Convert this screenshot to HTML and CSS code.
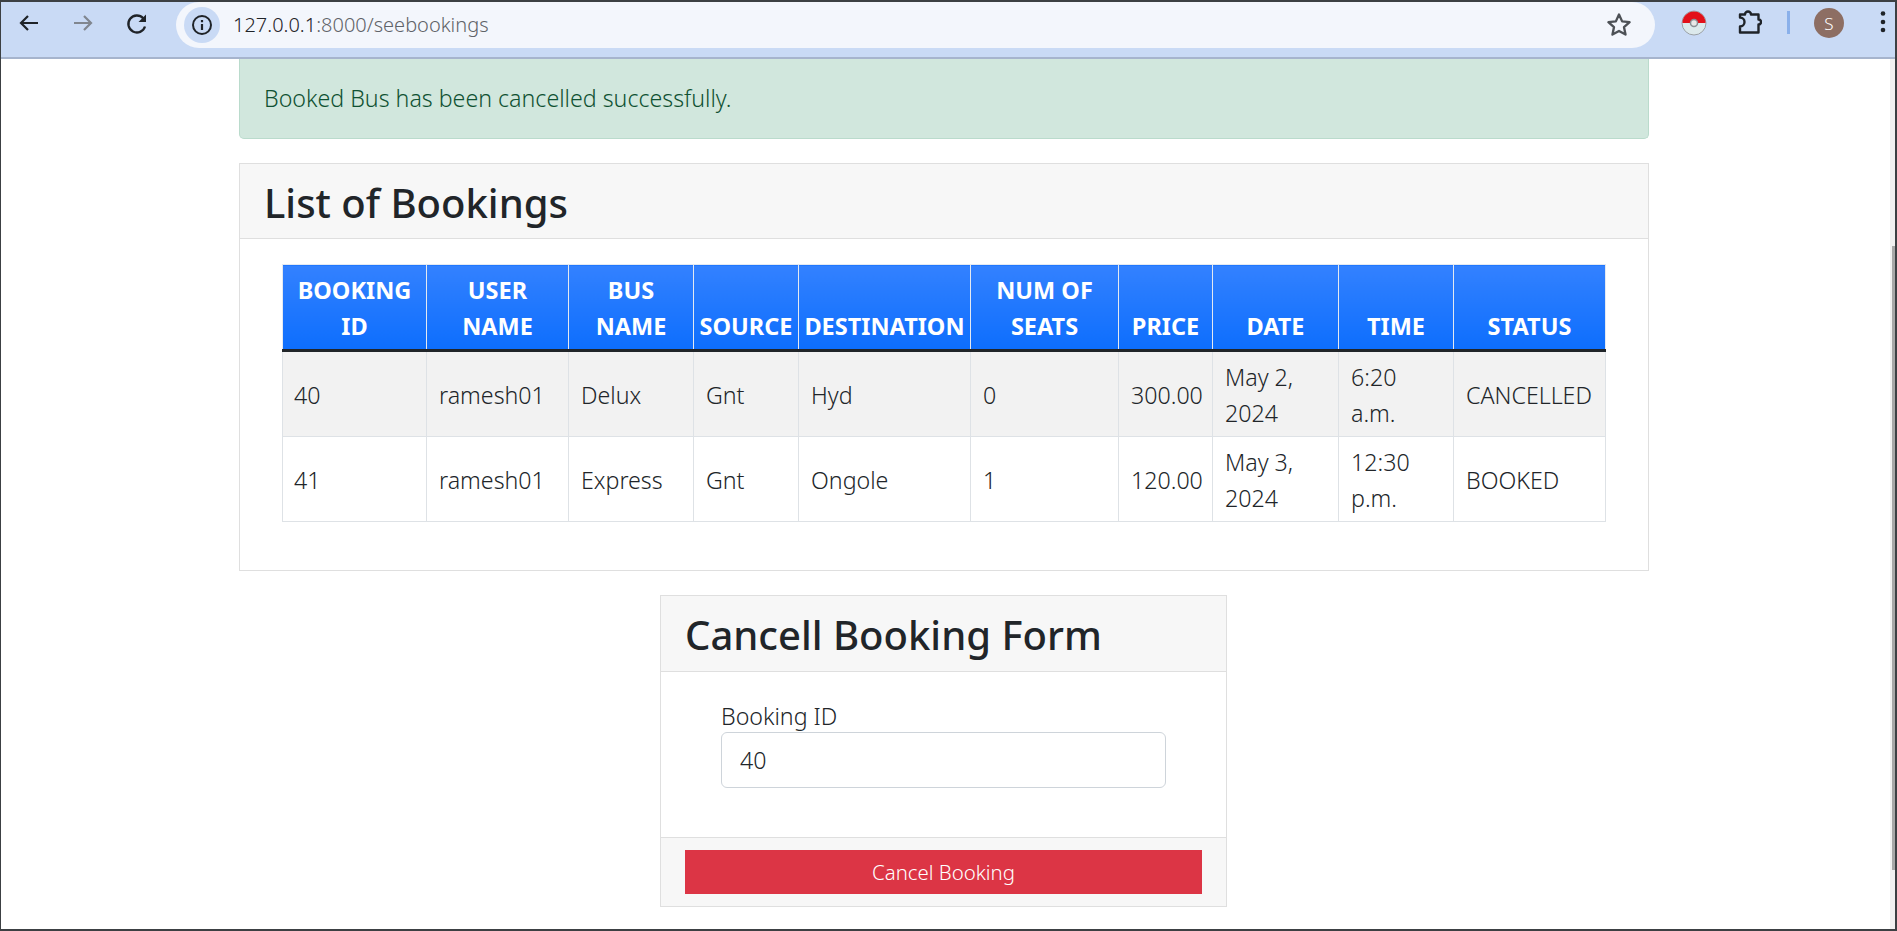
FILE: index.html
```html
<!DOCTYPE html>
<html lang="en">
<head>
<meta charset="utf-8">
<title>seebookings</title>
<link rel="stylesheet" href="styles.css">
</head>
<body>
<div class="window">
  <header class="chrome">
    <div class="nav-icons">
      <svg class="ic" viewBox="0 0 24 24"><path d="M21 12H4M11 5 4 12l7 7" fill="none" stroke="#1f2328" stroke-width="2.200"/></svg>
      <svg class="ic" viewBox="0 0 24 24"><path d="M3 12h17M13 5l7 7-7 7" fill="none" stroke="#80868f" stroke-width="2.200"/></svg>
      <svg class="ic" viewBox="0 0 24 24"><path d="M20 15.500a8.500 8.500 0 1 1-1.800-8.200L20 9" fill="none" stroke="#1f2328" stroke-width="2.300"/><path d="M21 3.500v7.500h-7.500z" fill="#1f2328"/></svg>
    </div>
    <div class="omnibox">
      <span class="site-info"><svg viewBox="0 0 22 22" width="22" height="22"><circle cx="11" cy="11" r="9" fill="none" stroke="#1f2328" stroke-width="2"/><path d="M11 10v6M11 6v2.200" stroke="#1f2328" stroke-width="2.200"/></svg></span>
      <span class="url"><span class="host">127.0.0.1</span>:8000/seebookings</span>
      <svg class="star" viewBox="0 0 24 24"><path d="m12 3 2.700 5.900 6.400.7-4.800 4.300 1.300 6.300L12 17.100l-5.600 3.100 1.300-6.300-4.800-4.300 6.400-.7z" fill="none" stroke="#4d5156" stroke-width="2" stroke-linejoin="round"/></svg>
    </div>
    <div class="tools">
      <svg class="poke" viewBox="0 0 26 26"><circle cx="13" cy="13" r="12" fill="#dce9ec" stroke="#9aa0a6"/><path d="M1.500 13a11.500 11.500 0 0 1 23 0z" fill="#e2101a"/><circle cx="13" cy="13" r="3.500" fill="#e8e8e8" stroke="#8a8f94" stroke-width="1.500"/></svg>
      <svg class="puzzle" viewBox="0 0 24 24"><path d="M2 4.500H7a3 3 0 0 1 6 0H20.500V9.500a2.500 2.500 0 0 1 0 5V22.500H2V16.500a4.500 4.500 0 0 0 0-9z" fill="none" stroke="#1f2328" stroke-width="2.400" stroke-linejoin="round"/></svg>
      <span class="divider"></span>
      <span class="avatar">S</span>
      <svg class="menu" viewBox="0 0 6 24"><circle cx="3" cy="3.500" r="2.300" fill="#1f2328"/><circle cx="3" cy="12" r="2.300" fill="#1f2328"/><circle cx="3" cy="20" r="2.300" fill="#1f2328"/></svg>
    </div>
  </header>
  <main class="page">
    <div class="alert">Booked Bus has been cancelled successfully.</div>
    <section class="card">
      <div class="card-head"><h2>List of Bookings</h2></div>
      <div class="card-body">
        <table class="bookings">
          <colgroup>
            <col class="c1"><col class="c2"><col class="c3"><col class="c4"><col class="c5"><col class="c6"><col class="c7"><col class="c8"><col class="c9"><col class="c10">
          </colgroup>
          <thead>
            <tr><th>BOOKING ID</th><th>USER NAME</th><th>BUS NAME</th><th>SOURCE</th><th>DESTINATION</th><th>NUM OF SEATS</th><th>PRICE</th><th>DATE</th><th>TIME</th><th>STATUS</th></tr>
          </thead>
          <tbody>
            <tr class="odd"><td>40</td><td>ramesh01</td><td>Delux</td><td>Gnt</td><td>Hyd</td><td>0</td><td>300.00</td><td>May 2, 2024</td><td>6:20 a.m.</td><td>CANCELLED</td></tr>
            <tr><td>41</td><td>ramesh01</td><td>Express</td><td>Gnt</td><td>Ongole</td><td>1</td><td>120.00</td><td>May 3, 2024</td><td>12:30 p.m.</td><td>BOOKED</td></tr>
          </tbody>
        </table>
      </div>
    </section>
    <section class="card form-card">
      <div class="card-head"><h2>Cancell Booking Form</h2></div>
      <div class="form-body">
        <label class="field-label" for="bid">Booking ID</label>
        <input class="field" id="bid" type="text" value="40">
      </div>
      <div class="card-foot"><button class="cancel" type="button">Cancel Booking</button></div>
    </section>
  </main>
  <div class="scroll-track"><div class="scroll-thumb"></div></div>
</div>
</body>
</html>
```
FILE: styles.css
```css
* { box-sizing: border-box; }
html, body { margin: 0; height: 100%; overflow: hidden; }
body { font-family: "Noto Sans", "Open Sans", sans-serif; font-weight: 350; color: #212529; background: #fff; }
.window { position: relative; height: 931px; border-style: solid; border-color: #3c4043; border-width: 2px 2px 2px 1px; display: flex; flex-direction: column; overflow: hidden; }
.chrome { height: 57px; flex: none; background: #c9daf5; border-bottom: 2px solid #a6b4cd; display: flex; align-items: flex-start; }
.nav-icons { display: flex; gap: 30px; padding: 9px 0 0 16px; width: 175px; flex: none; }
.ic { width: 24px; height: 24px; flex: none; }
.omnibox { width: 1479px; height: 46px; background: #f3f6fc; border-radius: 23px; display: flex; align-items: center; padding: 0 22px 0 8px; flex: none; }
.site-info { width: 36px; height: 36px; border-radius: 50%; background: #c9daf5; display: flex; align-items: center; justify-content: center; flex: none; }
.url { margin: 0 0 2px 13px; font-size: 20px; color: #5f6368; flex: 1; }
.host { color: #1f2328; }
.star { width: 28px; height: 28px; flex: none; }
.tools { display: flex; align-items: center; height: 40px; flex: 1; padding-left: 26px; }
.poke { width: 26px; height: 26px; margin-top: 1px; flex: none; }
.puzzle { width: 24px; height: 24px; margin-left: 31px; flex: none; }
.divider { width: 3px; height: 23px; background: #8ab0ea; margin-left: 25px; flex: none; }
.avatar { width: 30px; height: 30px; border-radius: 50%; background: #8d6e63; color: #fff; font-size: 17px; display: flex; align-items: center; justify-content: center; margin: 2px 0 0 24px; flex: none; }
.menu { width: 6px; height: 24px; margin-left: 36px; flex: none; }
.page { flex: 1; width: 1410px; margin-left: 238px; }
.alert { height: 80px; background: #d1e7dd; border: 1px solid #badbcc; border-top: 0; border-radius: 0 0 5px 5px; color: #0f5132; font-size: 23.200px; line-height: 36px; padding: 21px 0 0 24px; }
.card { border: 1px solid #dfdfdf; margin-top: 24px; background: #fff; }
.card-head { height: 75px; background: #f7f7f7; border-bottom: 1px solid #dfdfdf; padding: 4px 24px 0; display: flex; align-items: center; }
h2 { margin: 0; font-size: 40px; font-weight: 500; line-height: 48px; color: #212529; }
.card-body { padding: 25px 42px 48px 42px; }
.bookings { width: 1323px; table-layout: fixed; border-collapse: collapse; font-size: 23.200px; line-height: 36px; }
.c1 { width: 144px; } .c2 { width: 142px; } .c3 { width: 125px; } .c4 { width: 105px; } .c5 { width: 172px; }
.c6 { width: 148px; } .c7 { width: 94px; } .c8 { width: 126px; } .c9 { width: 115px; } .c10 { width: 152px; }
.bookings th { background: linear-gradient(#3381ff, #0d6efd); color: #fff; font-size: 23.500px; font-weight: 700; text-align: center; vertical-align: bottom; padding: 6px 4px 5px; border: 1px solid #e4e9f1; border-bottom: 3px solid #212529; height: 86px; }
.bookings td { border: 1px solid #dee2e6; padding: 7px 12px 5px; vertical-align: middle; height: 85px; }
.bookings td:first-child { padding-left: 11px; }
.bookings .odd td { background: #f2f2f2; }
.form-card { width: 567px; margin: 24px 0 0 421px; }
.form-card .card-head { height: 76px; padding-top: 3px; }
.form-body { height: 165px; padding: 29px 60px 0 60px; }
.field-label { display: block; font-size: 23.200px; line-height: 30px; }
.field { display: block; width: 445px; height: 56px; margin-top: 1px; border: 1px solid #ced4da; border-radius: 6px; padding: 0 18px; font: inherit; font-size: 23.200px; color: #212529; background: #fff; }
.card-foot { height: 69px; background: #f7f7f7; border-top: 1px solid #dfdfdf; padding: 12px 24px 0 24px; }
.cancel { display: block; width: 517px; height: 44px; border: 0; background: #dc3545; color: #fff; font-family: inherit; font-weight: inherit; font-size: 20.400px; padding: 0; }
.scroll-track { position: absolute; right: 0; top: 57px; bottom: 0; width: 5px; background: #f1f1f1; }
.scroll-thumb { margin: 187px 0 0 2px; height: 624px; width: 3px; background: #a8a8a8; }
```
